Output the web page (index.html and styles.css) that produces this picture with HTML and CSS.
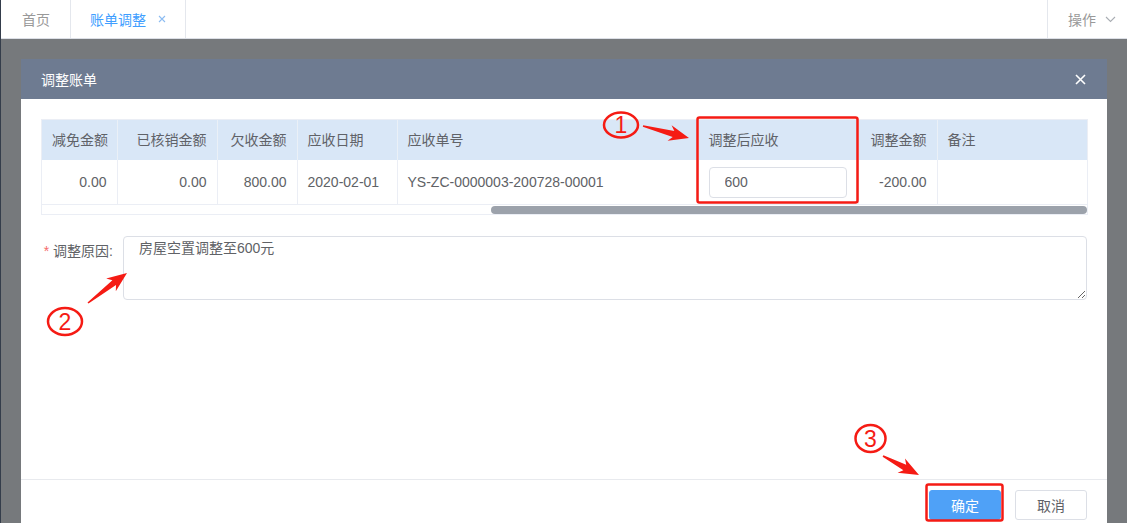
FILE: index.html
```html
<!DOCTYPE html>
<html lang="zh-CN">
<head>
    <meta charset="UTF-8">
    <meta name="viewport" content="width=device-width, initial-scale=1.0">
    <title>账单调整</title>
    <link rel="stylesheet" href="styles.css">
</head>
<body>

<div class="page">
    <div class="tabs">
        <div class="tab">首页</div>
        <div class="tab active">账单调整
            <svg class="tab-close" width="8" height="8" viewBox="0 0 8 8"><path d="M1 1L7 7M7 1L1 7"/></svg>
        </div>
        <div class="tabs-spacer"></div>
        <div class="tab-menu">操作
            <svg class="chevron" width="11" height="7" viewBox="0 0 11 7"><path d="M1 1L5.5 5.5L10 1"/></svg>
        </div>
    </div>

    <div class="mask">
        <div class="dialog">
            <div class="dialog-header">
                <span>调整账单</span>
                <svg class="dialog-close" width="11" height="11" viewBox="0 0 11 11"><path d="M1 1L10 10M10 1L1 10"/></svg>
            </div>

            <div class="dialog-body">
                <div class="grid">
                    <table>
                        <colgroup>
                            <col style="width:75px">
                            <col style="width:100px">
                            <col style="width:80px">
                            <col style="width:100px">
                            <col style="width:301px">
                            <col style="width:160px">
                            <col style="width:79px">
                            <col>
                        </colgroup>
                        <thead>
                            <tr>
                                <th class="num">减免金额</th>
                                <th class="num">已核销金额</th>
                                <th class="num">欠收金额</th>
                                <th>应收日期</th>
                                <th>应收单号</th>
                                <th>调整后应收</th>
                                <th class="num">调整金额</th>
                                <th>备注</th>
                            </tr>
                        </thead>
                        <tbody>
                            <tr>
                                <td class="num">0.00</td>
                                <td class="num">0.00</td>
                                <td class="num">800.00</td>
                                <td>2020-02-01</td>
                                <td>YS-ZC-0000003-200728-00001</td>
                                <td><input class="cell-input" type="text" value="600"></td>
                                <td class="num">-200.00</td>
                                <td></td>
                            </tr>
                        </tbody>
                    </table>
                    <div class="scrollbar">
                        <div class="scrollbar-thumb"></div>
                    </div>
                </div>

                <div class="form-row">
                    <label class="form-label"><span class="required">*</span>调整原因:</label>
                    <textarea class="form-textarea">房屋空置调整至600元</textarea>
                </div>
            </div>

            <div class="dialog-footer">
                <button class="btn btn-primary">确定</button>
                <button class="btn">取消</button>
            </div>
        </div>
    </div>

    <!-- annotation marks drawn on top of the screenshot -->
    <svg class="marks" width="1127" height="523" viewBox="0 0 1127 523">
        <rect x="697.5" y="117.5" width="160" height="85" rx="2"/>
        <rect x="926.5" y="484.5" width="76" height="36" rx="2"/>

        <ellipse cx="621" cy="125" rx="17" ry="12.5"/>
        <ellipse cx="65" cy="321.5" rx="17" ry="13.5"/>
        <ellipse cx="870.5" cy="438.5" rx="15" ry="13.5"/>

        <text x="621" y="133">1</text>
        <text x="65" y="330">2</text>
        <text x="870.5" y="447">3</text>

        <polygon points="643.2,125.2 674.3,131.1 671.6,125.3 689,138 667.6,140.7 672.7,136.9 642.8,126.8"/>
        <polygon points="87.5,302.4 112.4,280.2 106.2,278.5 127,273 115.8,291.3 116,285 88.5,303.6"/>
        <polygon points="883.4,455.3 906.2,464.8 905,458.6 919,475 897.6,472.8 903.4,470.2 882.6,456.7"/>
    </svg>
</div>

</body>
</html>
```

FILE: styles.css
```css
body {
    margin: 0;
    font-family: "Liberation Sans", "Noto Sans CJK SC", sans-serif;
    font-size: 14px;
    color: #606266;
    overflow: hidden;
}
.page {
    position: relative;
    width: 1126px;
    height: 523px;
    border-left: 1px solid #343d4b;
    display: flex;
    flex-direction: column;
    overflow: hidden;
}

/* tabs */
.tabs {
    display: flex;
    height: 38px;
    border-bottom: 1px solid #dcdfe6;
    background-color: #ffffff;
    flex-shrink: 0;
}
.tab {
    display: flex;
    align-items: center;
    padding: 0 20px 0 21px;
    border-right: 1px solid #e4e7ed;
    color: #999999;
}
.tab.active {
    padding: 0 19px 0 19px;
    color: #409eff;
}
.tab-close {
    margin-left: 12px;
    fill: none;
    stroke: #8cbcf2;
    stroke-width: 1.1;
}
.tabs-spacer {
    flex: 1;
}
.tab-menu {
    display: flex;
    align-items: center;
    padding: 0 11px 0 20px;
    border-left: 1px solid #e4e7ed;
    color: #999999;
}
.chevron {
    margin-left: 9px;
    fill: none;
    stroke: #a9adb3;
    stroke-width: 1.1;
}

/* overlay + dialog */
.mask {
    flex: 1;
    background-color: #76797c;
    padding: 20px 0 0 20px;
}
.dialog {
    width: 1086px;
    background-color: #ffffff;
}
.dialog-header {
    height: 40px;
    padding: 0 21px 0 20px;
    display: flex;
    align-items: center;
    justify-content: space-between;
    background-color: #6e7b91;
    color: #ffffff;
}
.dialog-close {
    fill: none;
    stroke: #ffffff;
    stroke-width: 1.6;
}
.dialog-body {
    height: 380px;
    padding: 20px 20px 0 20px;
    box-sizing: border-box;
}

/* table */
.grid {
    border: 1px solid #ebeef5;
    width: 1045px;
}
table {
    width: 100%;
    border-collapse: collapse;
    table-layout: fixed;
}
th, td {
    padding: 0 10px;
    text-align: left;
    border-right: 1px solid #ebeef5;
    white-space: nowrap;
    overflow: hidden;
}
th:last-child, td:last-child {
    border-right: none;
}
th {
    height: 40px;
    padding-bottom: 3px;
    box-sizing: border-box;
    font-weight: normal;
    color: #5f6268;
    background-color: #d9e7f7;
    border-right-color: #eaf0f7;
}
td {
    height: 44px;
    border-bottom: 1px solid #ebeef5;
}
.num {
    text-align: right;
}
.cell-input {
    width: 138px;
    height: 31px;
    box-sizing: border-box;
    padding: 0 15px;
    border: 1px solid #dcdfe6;
    border-radius: 4px;
    font-family: inherit;
    font-size: 14px;
    color: #606266;
    outline: none;
}
.scrollbar {
    height: 9px;
    display: flex;
    justify-content: flex-end;
    align-items: center;
}
.scrollbar-thumb {
    width: 596px;
    height: 8px;
    border-radius: 4px;
    background-color: #9ca2ab;
}

/* form */
.form-row {
    display: flex;
    margin-top: 21px;
}
.form-label {
    width: 82px;
    padding-right: 10px;
    box-sizing: border-box;
    line-height: 30px;
    text-align: right;
    color: #606266;
}
.required {
    color: #f56c6c;
    margin-right: 4px;
}
.form-textarea {
    flex: 1;
    height: 64px;
    box-sizing: border-box;
    padding: 1px 15px;
    border: 1px solid #dcdfe6;
    border-radius: 4px;
    font-family: inherit;
    font-size: 14px;
    line-height: 21px;
    color: #606266;
    resize: vertical;
    outline: none;
}

/* footer */
.dialog-footer {
    border-top: 1px solid #e8eaee;
    padding: 10px 20px;
    display: flex;
    justify-content: flex-end;
    gap: 14px;
}
.btn {
    width: 72px;
    height: 30px;
    border: 1px solid #dcdfe6;
    border-radius: 3px;
    background-color: #ffffff;
    font-family: inherit;
    font-size: 14px;
    color: #606266;
    padding: 0;
}
.btn-primary {
    background-color: #4fa1f7;
    border-color: #4fa1f7;
    color: #ffffff;
}

/* annotations */
.marks {
    position: absolute;
    top: 0;
    left: -1px;
    pointer-events: none;
}
.marks rect, .marks ellipse {
    fill: none;
    stroke: #f51b14;
    stroke-width: 2.5;
}
.marks text {
    fill: #f51b14;
    font-family: "Liberation Sans", sans-serif;
    font-size: 23px;
    text-anchor: middle;
}
.marks polygon {
    fill: #f51b14;
}
```
